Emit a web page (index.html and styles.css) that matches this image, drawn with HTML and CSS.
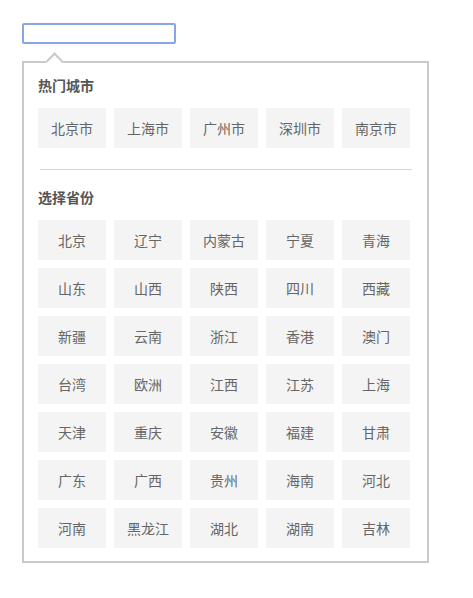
FILE: index.html
```html
<!DOCTYPE html>
<html lang="zh-CN">
<head>
    <meta charset="UTF-8">
    <meta name="viewport" content="width=device-width, initial-scale=1.0">
    <title>城市选择</title>
    <link rel="stylesheet" href="styles.css">
</head>
<body>
    <!-- City input -->
    <div class="picker">
        <input type="text" class="city-input" id="city-input">

        <!-- Dropdown panel -->
        <div class="city-panel" id="city-panel">
            <h3 class="panel-title">热门城市</h3>
            <div class="city-grid">
                <span class="city-item">北京市</span>
                <span class="city-item">上海市</span>
                <span class="city-item">广州市</span>
                <span class="city-item">深圳市</span>
                <span class="city-item">南京市</span>
            </div>

            <div class="divider"></div>

            <h3 class="panel-title">选择省份</h3>
            <div class="city-grid">
                <span class="city-item">北京</span>
                <span class="city-item">辽宁</span>
                <span class="city-item">内蒙古</span>
                <span class="city-item">宁夏</span>
                <span class="city-item">青海</span>
                <span class="city-item">山东</span>
                <span class="city-item">山西</span>
                <span class="city-item">陕西</span>
                <span class="city-item">四川</span>
                <span class="city-item">西藏</span>
                <span class="city-item">新疆</span>
                <span class="city-item">云南</span>
                <span class="city-item">浙江</span>
                <span class="city-item">香港</span>
                <span class="city-item">澳门</span>
                <span class="city-item">台湾</span>
                <span class="city-item">欧洲</span>
                <span class="city-item">江西</span>
                <span class="city-item">江苏</span>
                <span class="city-item">上海</span>
                <span class="city-item">天津</span>
                <span class="city-item">重庆</span>
                <span class="city-item">安徽</span>
                <span class="city-item">福建</span>
                <span class="city-item">甘肃</span>
                <span class="city-item">广东</span>
                <span class="city-item">广西</span>
                <span class="city-item">贵州</span>
                <span class="city-item">海南</span>
                <span class="city-item">河北</span>
                <span class="city-item">河南</span>
                <span class="city-item">黑龙江</span>
                <span class="city-item">湖北</span>
                <span class="city-item">湖南</span>
                <span class="city-item">吉林</span>
            </div>
        </div>
    </div>

    <script>
        document.querySelectorAll(".city-item").forEach(function (item) {
            item.addEventListener("click", function () {
                document.getElementById("city-input").value = item.textContent;
            });
        });
    </script>
</body>
</html>
```

FILE: styles.css
```css
* {
    margin: 0;
    padding: 0;
    box-sizing: border-box;
    font-family: 'Microsoft YaHei', 'Noto Sans CJK SC', sans-serif;
}

body {
    background: #ffffff;
    padding: 23px 22px;
}

.picker {
    width: 407px;
}

.city-input {
    display: block;
    width: 154px;
    height: 21px;
    border: 2px solid #86a7e6;
    border-radius: 2px;
    outline: none;
    padding: 0 4px;
    font-size: 13px;
    color: #333;
}

.city-panel {
    position: relative;
    margin-top: 17px;
    border: 2px solid #c9c9cd;
    padding: 12px 15px 13px 14px;
    background: #ffffff;
}

/* little pointer above the panel */
.city-panel::before {
    content: "";
    position: absolute;
    top: -8px;
    left: 24px;
    width: 11px;
    height: 11px;
    background: #ffffff;
    border-top: 2px solid #c9c9cd;
    border-left: 2px solid #c9c9cd;
    transform: rotate(45deg);
}

.panel-title {
    font-size: 14px;
    font-weight: bold;
    line-height: 20px;
    color: #555;
    margin-bottom: 13px;
}

.city-grid {
    display: grid;
    grid-template-columns: repeat(5, 68px);
    gap: 8px;
}

.city-item {
    height: 40px;
    line-height: 40px;
    text-align: center;
    background: #f4f4f4;
    color: #666;
    font-size: 14px;
    cursor: pointer;
}

.city-item:hover {
    background: #e6eefb;
}

.divider {
    height: 1px;
    background: #d6d6d6;
    margin: 21px 0 17px 2px;
}
```
